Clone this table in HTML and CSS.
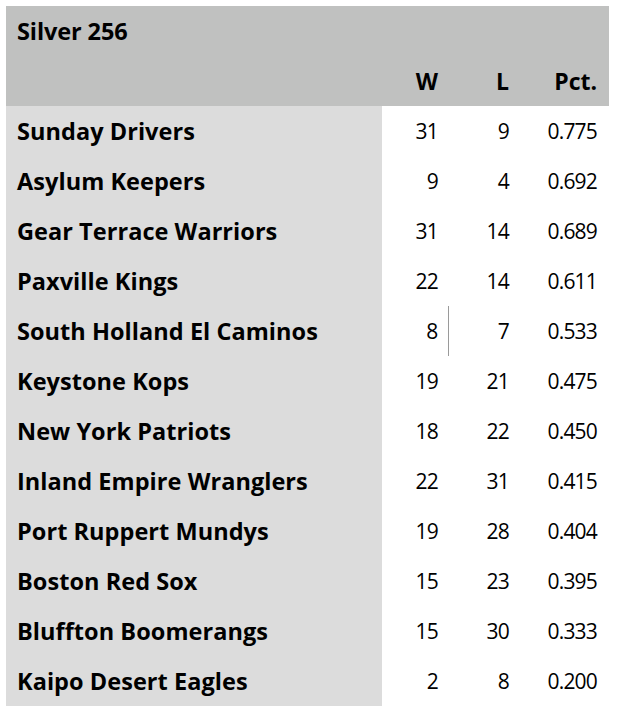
FILE: index.html
```html
<!DOCTYPE html>
<html>
<head>
<meta charset="utf-8">
<link rel="stylesheet" href="styles.css">
</head>
<body>
<table class="standings">
  <colgroup>
    <col class="c-name">
    <col class="c-w">
    <col class="c-l">
    <col class="c-pct">
  </colgroup>
  <thead>
    <tr class="title-row"><th class="title" colspan="4">Silver 256</th></tr>
    <tr class="col-row">
      <th class="name-h"></th>
      <th class="num-h">W</th>
      <th class="num-h">L</th>
      <th class="num-h pct">Pct.</th>
    </tr>
  </thead>
  <tbody>
    <tr><td class="team">Sunday Drivers</td><td class="num">31</td><td class="num">9</td><td class="num pct">0.775</td></tr>
    <tr><td class="team">Asylum Keepers</td><td class="num">9</td><td class="num">4</td><td class="num pct">0.692</td></tr>
    <tr><td class="team">Gear Terrace Warriors</td><td class="num">31</td><td class="num">14</td><td class="num pct">0.689</td></tr>
    <tr><td class="team">Paxville Kings</td><td class="num">22</td><td class="num">14</td><td class="num pct">0.611</td></tr>
    <tr><td class="team">South Holland El Caminos</td><td class="num divider">8</td><td class="num">7</td><td class="num pct">0.533</td></tr>
    <tr><td class="team">Keystone Kops</td><td class="num">19</td><td class="num">21</td><td class="num pct">0.475</td></tr>
    <tr><td class="team">New York Patriots</td><td class="num">18</td><td class="num">22</td><td class="num pct">0.450</td></tr>
    <tr><td class="team">Inland Empire Wranglers</td><td class="num">22</td><td class="num">31</td><td class="num pct">0.415</td></tr>
    <tr><td class="team">Port Ruppert Mundys</td><td class="num">19</td><td class="num">28</td><td class="num pct">0.404</td></tr>
    <tr><td class="team">Boston Red Sox</td><td class="num">15</td><td class="num">23</td><td class="num pct">0.395</td></tr>
    <tr><td class="team">Bluffton Boomerangs</td><td class="num">15</td><td class="num">30</td><td class="num pct">0.333</td></tr>
    <tr><td class="team">Kaipo Desert Eagles</td><td class="num">2</td><td class="num">8</td><td class="num pct">0.200</td></tr>
  </tbody>
</table>
</body>
</html>
```
FILE: styles.css
```css
html, body {
  margin: 0;
  padding: 0;
  background: #ffffff;
}
body {
  padding: 6px;
  font-family: "Open Sans", "Liberation Sans", sans-serif;
  color: #000;
}
.standings {
  border-collapse: collapse;
  width: 603px;
  table-layout: fixed;
}
.c-name { width: 376px; }
.c-w { width: 66px; }
.c-l { width: 71px; }
.c-pct { width: 90px; }
.standings th, .standings td {
  padding: 0;
  height: 50px;
  box-sizing: border-box;
  vertical-align: middle;
}
.standings .title-row th, .standings .col-row th {
  background: #c0c1c0;
}
.standings .title {
  text-align: left;
  padding-left: 11px;
  font-weight: 700;
  font-size: 23.5px;
  letter-spacing: -0.1px;
}
.standings .num-h {
  text-align: right;
  font-weight: 700;
  font-size: 23px;
  padding-right: 10px;
}
.standings .team {
  background: #dcdcdc;
  font-weight: 700;
  font-size: 23.5px;
  padding-left: 11px;
  white-space: nowrap;
  letter-spacing: 0.05px;
}
.standings .num {
  text-align: right;
  font-size: 21px;
  letter-spacing: -0.8px;
  padding-right: 10px;
}
.standings .pct { padding-right: 12px; }
.standings .divider {
  border-right: 1px solid #9a9a9a;
}
```
